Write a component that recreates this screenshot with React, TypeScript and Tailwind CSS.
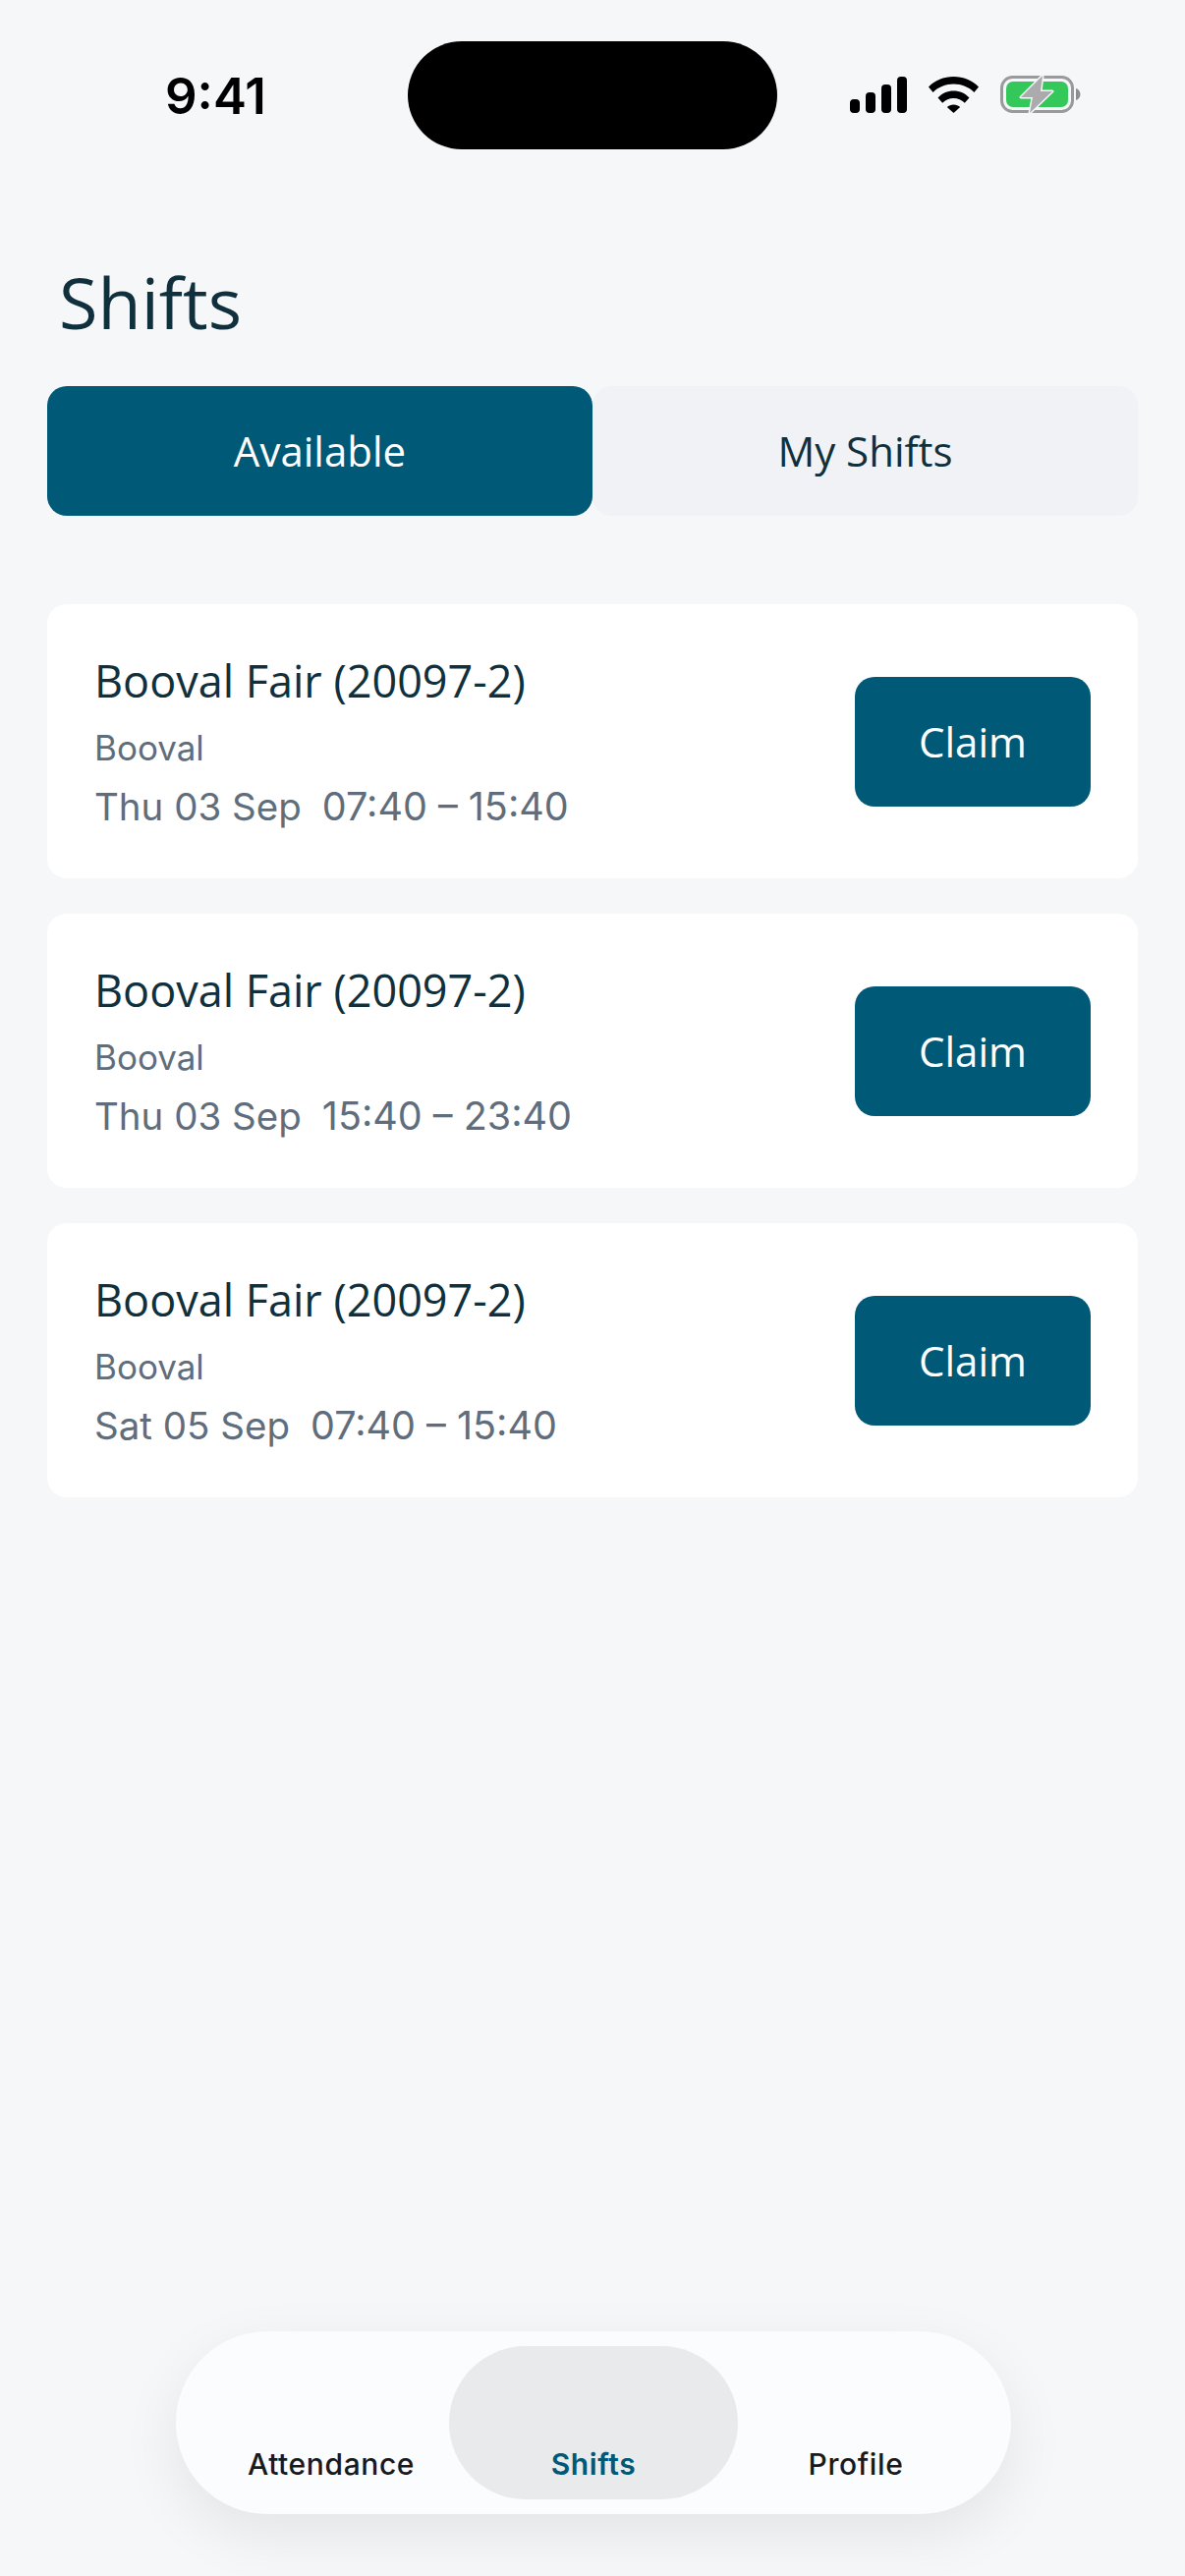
const shifts = [
  { id: 1, date: 'Thu 03 Sep', time: '07:40 – 15:40' },
  { id: 2, date: 'Thu 03 Sep', time: '15:40 – 23:40' },
  { id: 3, date: 'Sat 05 Sep', time: '07:40 – 15:40' },
];

function StatusIcons() {
  return (
    <div className="flex items-center gap-[22px]">
      <svg width="58" height="37" viewBox="0 0 58 37" fill="#000">
        <rect x="0" y="23" width="10" height="14" rx="4" />
        <rect x="16" y="16" width="10" height="21" rx="4" />
        <rect x="32" y="8" width="10" height="29" rx="4" />
        <rect x="48" y="0" width="10" height="37" rx="4" />
      </svg>
      <svg width="51" height="37" viewBox="0 0 51 37" fill="#000">
        <path d="M0 10.500C6.500 3.800 15.500 0 25.500 0s19 3.800 25.500 10.500l-4.600 5.500C41 10.500 33.500 7.500 25.500 7.500S10 10.500 4.600 16z" />
        <path d="M9.500 21.500C13.600 17 19.300 14.500 25.500 14.500s11.900 2.500 16 7l-4.700 5.200C33.800 23.600 29.800 22 25.500 22s-8.300 1.600-11.300 4.700z" />
        <path d="M18.800 31c1.800-1.700 4.100-2.600 6.700-2.600s4.900.9 6.700 2.600L25.500 37z" />
      </svg>
      <svg width="82" height="40" viewBox="0 0 82 40">
        <rect x="1.500" y="2.500" width="72" height="35" rx="11" fill="none" stroke="#9a9a9c" strokeWidth="3" />
        <rect x="6" y="7" width="63" height="26" rx="7" fill="#34c759" />
        <path d="M77 14c2.700.7 4.500 3.200 4.500 6s-1.800 5.300-4.500 6z" fill="#8e8e90" />
        <path d="M43 1 21 23h12l-3 16 23-22H41z" fill="#ababad" stroke="#f6f7f9" strokeWidth="3" paintOrder="stroke" strokeLinejoin="round" />
      </svg>
    </div>
  );
}

function ShiftCard({ date, time }: { date: string; time: string }) {
  return (
    <article className="flex h-[279px] items-center justify-between rounded-[20px] bg-white pl-[48px] pr-[48px]">
      <div>
        <h3 className="font-['Open_Sans',sans-serif] text-[45px] leading-[60px] text-[#0f303c]">Booval Fair (20097-2)</h3>
        <p className="mt-[13px] font-['Inter',sans-serif] text-[35px] leading-[50px] text-[#5f6d7c]">Booval</p>
        <p className="mt-[10px] flex gap-[21px] font-['Inter',sans-serif] text-[38.500px] leading-[50px] text-[#5f6d7c]">
          <span>{date}</span>
          <span className="text-[39.500px]">{time}</span>
        </p>
      </div>
      <button type="button" className="h-[132px] w-[240px] rounded-[20px] bg-[#005977] font-['Open_Sans',sans-serif] text-[42px] text-white">
        Claim
      </button>
    </article>
  );
}

export default function App() {
  return (
    <div className="relative h-[2622px] w-[1206px] overflow-hidden bg-[#f6f7f9]">
      <header className="grid h-[152px] grid-cols-[415px_376px_1fr] pt-[42px]">
        <span className="pl-[168px] pt-[26px] font-['Inter',sans-serif] text-[51px] font-semibold leading-[60px] text-black">9:41</span>
        <div className="h-[110px] rounded-[55px] bg-black" />
        <div className="pl-[74px] pt-[34px]">
          <StatusIcons />
        </div>
      </header>

      <main className="px-[48px]">
        <h1 className="ml-[12px] mt-[111px] font-['Open_Sans',sans-serif] text-[72px] leading-[88px] text-[#0f303c]">Shifts</h1>

        <div className="mt-[42px] grid grid-cols-2">
          <button type="button" className="h-[132px] rounded-[20px] bg-[#005977] pb-[1px] font-['Open_Sans',sans-serif] text-[42px] text-white">
            Available
          </button>
          <button type="button" className="h-[132px] rounded-[20px] bg-[#f1f2f6] pb-[1px] font-['Open_Sans',sans-serif] text-[42px] text-[#0f303c]">
            My Shifts
          </button>
        </div>

        <section className="mt-[90px] flex flex-col gap-[36px]">
          {shifts.map((shift) => (
            <ShiftCard key={shift.id} date={shift.date} time={shift.time} />
          ))}
        </section>
      </main>

      {/* floating tab bar sits over the page */}
      <nav className="absolute left-[179px] top-[2373px] flex h-[186px] w-[850px] items-stretch rounded-[93px] bg-[#fbfcfe] px-[38px] py-[15px] font-['Inter',sans-serif] text-[30px] font-medium leading-[40px] tracking-[0.6px] text-[#1a1a1c] shadow-[0_20px_60px_rgba(0,0,0,0.08)]">
        <a className="flex w-[240px] items-end justify-center pb-[16px]">Attendance</a>
        <a className="flex w-[294px] items-end justify-center rounded-[79px] bg-[#e9eaec] pb-[16px] font-semibold text-[#005977]">Shifts</a>
        <a className="flex w-[240px] items-end justify-center pb-[16px]">Profile</a>
      </nav>
    </div>
  );
}
